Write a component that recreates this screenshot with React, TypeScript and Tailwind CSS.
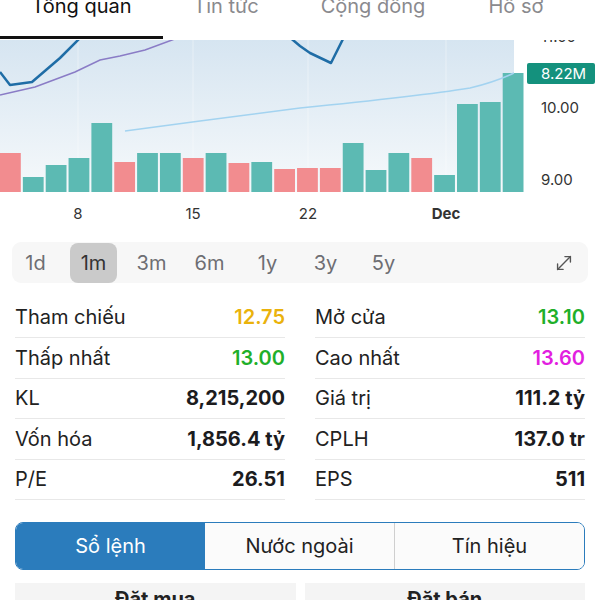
import { MoveDiagonal } from 'lucide-react';

const tabs = [
  { label: 'Tổng quan', w: 'w-[163px]', active: true },
  { label: 'Tin tức', w: 'w-[126px]', active: false },
  { label: 'Cộng đồng', w: 'w-[168px]', active: false },
  { label: 'Hồ sơ', w: 'w-[118px]', active: false },
];

// top of each volume bar (page px) and whether it closed up
const bars: [number, boolean][] = [
  [153, false], [177, true], [165, true], [158, true], [123, true], [162, false],
  [153, true], [153, true], [158, false], [153, true], [163, false], [162, true],
  [169, false], [168, false], [168, false], [143, true], [170, true], [153, true],
  [158, false], [175, true], [104, true], [102, true], [73, true],
];

const periods = ['1d', '1m', '3m', '6m', '1y', '3y', '5y'];

const leftStats = [
  { label: 'Tham chiếu', value: '12.75', cls: 'text-[#eab20c] font-semibold' },
  { label: 'Thấp nhất', value: '13.00', cls: 'text-[#1faf2a] font-semibold' },
  { label: 'KL', value: '8,215,200', cls: 'text-[#1c1c1e] font-bold' },
  { label: 'Vốn hóa', value: '1,856.4 tỷ', cls: 'text-[#1c1c1e] font-bold' },
  { label: 'P/E', value: '26.51', cls: 'text-[#1c1c1e] font-bold' },
];

const rightStats = [
  { label: 'Mở cửa', value: '13.10', cls: 'text-[#1faf2a] font-semibold' },
  { label: 'Cao nhất', value: '13.60', cls: 'text-[#e21fe0] font-semibold' },
  { label: 'Giá trị', value: '111.2 tỷ', cls: 'text-[#1c1c1e] font-bold' },
  { label: 'CPLH', value: '137.0 tr', cls: 'text-[#1c1c1e] font-bold' },
  { label: 'EPS', value: '511', cls: 'text-[#1c1c1e] font-bold' },
];

function StatColumn({ rows }: { rows: typeof leftStats }) {
  return (
    <div className="flex flex-col">
      {rows.map((r) => (
        <div key={r.label} className="h-[40.5px] flex items-center justify-between border-b border-[#e8e8e8]">
          <span className="text-[20px] text-[#222]">{r.label}</span>
          <span className={`text-[20px] ${r.cls}`}>{r.value}</span>
        </div>
      ))}
    </div>
  );
}

function Chart() {
  return (
    <svg width="600" height="190" viewBox="0 40 600 190" className="block" style={{ fontFamily: 'Inter, sans-serif' }}>
      <defs>
        <linearGradient id="bg" x1="0" y1="0" x2="0" y2="1">
          <stop offset="0" stopColor="#d6e5f1" />
          <stop offset="1" stopColor="#f6f9fb" />
        </linearGradient>
      </defs>
      <rect x="0" y="40" width="514" height="152" fill="url(#bg)" />
      {[78, 193, 308, 446].map((x) => (
        <line key={x} x1={x} y1="40" x2={x} y2="192" stroke="#ffffff" strokeOpacity="0.4" />
      ))}

      {bars.map(([top, up], i) => (
        <rect
          key={i}
          x={i * 22.85}
          y={top}
          width="20.8"
          height={192 - top}
          fill={up ? '#5cbab3' : '#f28c8f'}
        />
      ))}

      <polyline points="0,95 35,87 75,72 100,60 120,56 145,50 172,40 185,35" fill="none" stroke="#8a7cc6" strokeWidth="1.5" />
      <polyline points="0,72 10,85 32,82 60,58 82,36" fill="none" stroke="#1f6da6" strokeWidth="2.5" strokeLinejoin="round" />
      <polyline points="287,35 300,46 310,53 331,63 345,35" fill="none" stroke="#1f6da6" strokeWidth="2.5" strokeLinejoin="round" />
      <path d="M125 131 L200 121 L300 108 Q420 96 470 88 Q495 82 514 73" fill="none" stroke="#a3d3f0" strokeWidth="1.5" />

      <g fontSize="15" fill="#333">
        <text x="541" y="41.5">11.00</text>
        <text x="541" y="112.5">10.00</text>
        <text x="541" y="184.5">9.00</text>
        <text x="78" y="218.5" textAnchor="middle">8</text>
        <text x="193" y="218.5" textAnchor="middle">15</text>
        <text x="308" y="218.5" textAnchor="middle">22</text>
        <text x="446" y="218.5" textAnchor="middle" fontWeight="700">Dec</text>
      </g>
      <rect x="527" y="63" width="68" height="21" rx="2" fill="#14917d" />
      <text x="541" y="79" fontSize="15" fill="#ffffff">8.22M</text>
    </svg>
  );
}

export default function App() {
  return (
    <div className="w-[600px] h-[600px] overflow-hidden bg-white font-['Inter',sans-serif] text-[#222]">
      {/* Tabs */}
      <div className="h-[40px] flex bg-white overflow-hidden">
        {tabs.map((t) => (
          <div key={t.label} className={`${t.w} h-full flex flex-col justify-between`}>
            <span className={`mt-[-6px] text-[20px] leading-[24px] text-center ${t.active ? 'text-[#111]' : 'text-[#8a8a8e]'}`}>
              {t.label}
            </span>
            {t.active && <div className="h-[3px] mb-[1px] bg-[#111]" />}
          </div>
        ))}
      </div>

      <Chart />

      {/* Period selector */}
      <div className="mx-[12px] mt-[12px] h-[41px] rounded-[9px] bg-[#f7f7f7] flex items-center">
        <div className="flex gap-[11px]">
          {periods.map((p) => (
            <div
              key={p}
              className={`w-[47px] h-[40px] flex items-center justify-center text-[20px] rounded-[8px] ${
                p === '1m' ? 'bg-[#cacaca] text-[#333]' : 'text-[#6e6e73]'
              }`}
            >
              {p}
            </div>
          ))}
        </div>
        <MoveDiagonal size={22} strokeWidth={1.5} className="ml-auto mr-[13px] text-[#555]" />
      </div>

      {/* Stats */}
      <div className="mt-[14.5px] px-[15px] grid grid-cols-2 gap-x-[30px]">
        <StatColumn rows={leftStats} />
        <StatColumn rows={rightStats} />
      </div>

      {/* Segmented control */}
      <div className="mx-[15px] mt-[22px] h-[48px] flex rounded-[8px] border-[1.5px] border-[#2b7cbc] overflow-hidden">
        <div className="flex-1 flex items-center justify-center bg-[#2b7cbc] text-white text-[20px]">Sổ lệnh</div>
        <div className="flex-1 flex items-center justify-center bg-[#fbfbfb] text-[#222] text-[20px] border-r border-[#cfcfcf]">Nước ngoài</div>
        <div className="flex-1 flex items-center justify-center bg-[#fbfbfb] text-[#222] text-[20px]">Tín hiệu</div>
      </div>

      {/* Order book headers */}
      <div className="mx-[15px] mt-[13px] grid grid-cols-2 gap-x-[9px]">
        <div className="h-[40px] bg-[#f4f4f4] flex justify-center pt-[4px]">
          <span className="text-[20px] font-bold text-[#222] leading-[24px]">Đặt mua</span>
        </div>
        <div className="h-[40px] bg-[#f4f4f4] flex justify-center pt-[4px]">
          <span className="text-[20px] font-bold text-[#222] leading-[24px]">Đặt bán</span>
        </div>
      </div>
    </div>
  );
}
